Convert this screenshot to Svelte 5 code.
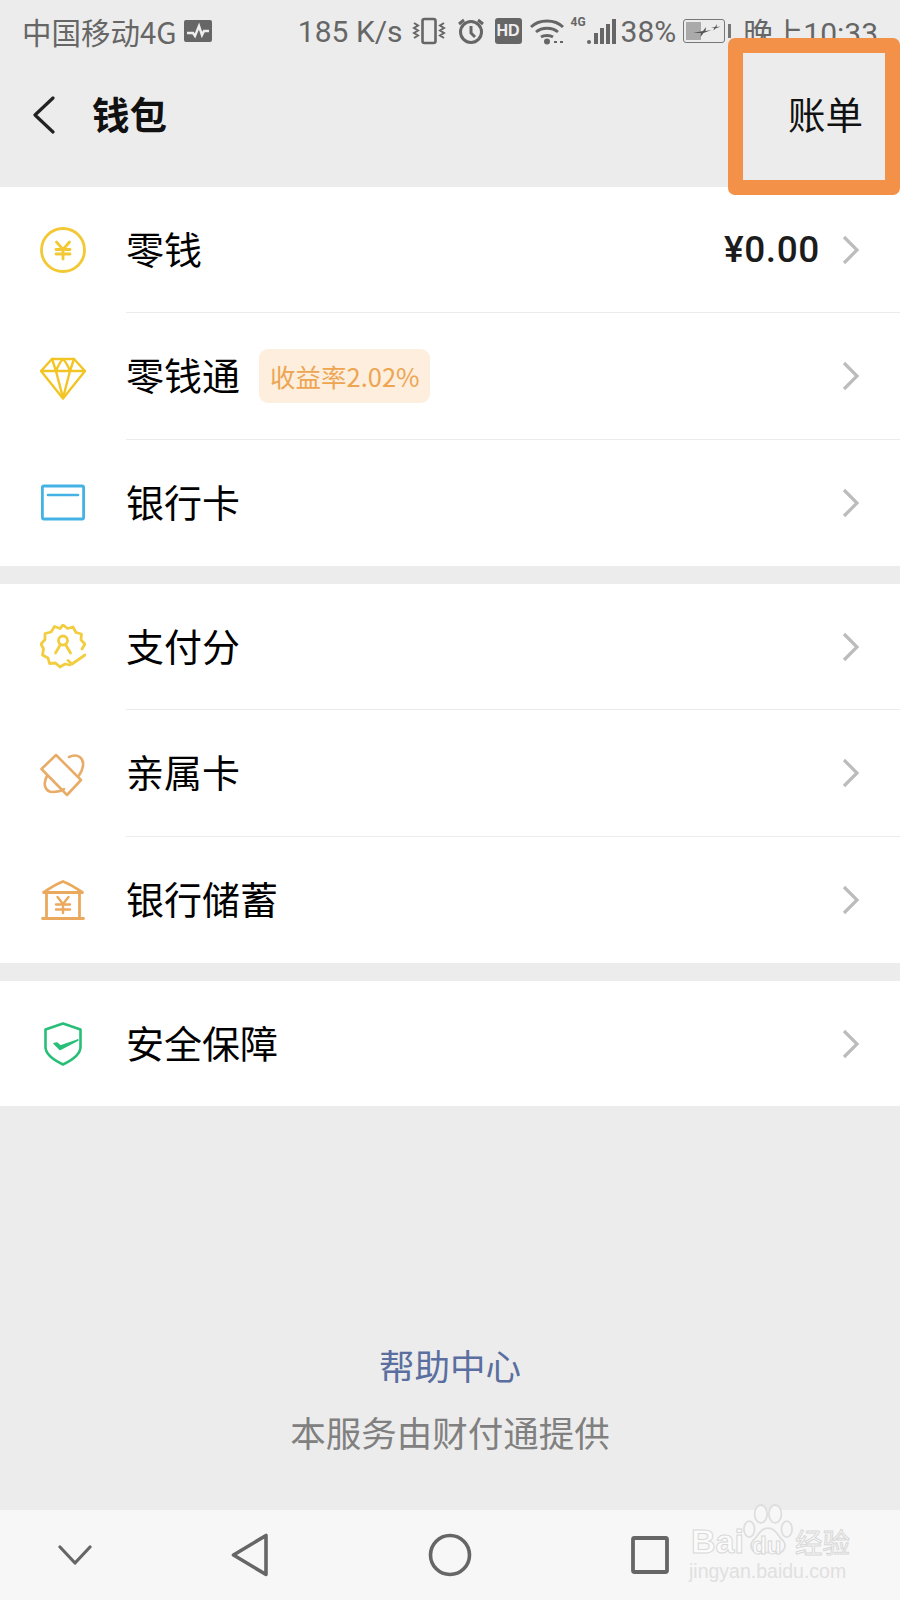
<script>
  const sections = [
    [
      { icon: "coin", label: "零钱", value: "¥0.00" },
      { icon: "diamond", label: "零钱通", badge: "收益率2.02%" },
      { icon: "card", label: "银行卡" },
    ],
    [
      { icon: "score", label: "支付分" },
      { icon: "family", label: "亲属卡" },
      { icon: "bank", label: "银行储蓄" },
    ],
    [{ icon: "shield", label: "安全保障" }],
  ];
</script>

{#snippet rowIcon(name)}
  <svg class="row-icon" viewBox="0 0 46 46" width="46" height="46" fill="none" stroke-linecap="round" stroke-linejoin="round">
    {#if name === "coin"}
      <g stroke="#f2c834">
        <circle cx="23" cy="23" r="21.5" stroke-width="2.8" />
        <path d="M16.5 15 23 22.500l6.500-7.500M16 22.500h14M16 27h14M23 22.500v9.500" stroke-width="2.800" fill="none" />
      </g>
    {:else if name === "diamond"}
      <g stroke="#f2c525" stroke-width="2.400">
        <path d="M12 5h22L45 17 23 44.500 1 17Z" />
        <path d="M1 17h44M12 5l4 12 7 27 7-27 4-12M16 17c2-5 4-9 7-12 3 3 5 7 7 12" />
      </g>
    {:else if name === "card"}
      <g stroke="#45b2e5">
        <rect x="2.400" y="6" width="41.200" height="33" rx="1.500" stroke-width="2.800" />
        <path d="M8 15h30" stroke-width="2.600" />
      </g>
    {:else if name === "score"}
      <g stroke="#f3cd40" stroke-width="2.800">
        <path d="M30 41 25 40l-5 3-4.500-4-6 .5L8 34l-5.500-3 1-6L1 20l4-4.500L5 9.500 11 8l3.500-5.500L20 4.500 23 1l4.500 3.500 5.500-1.500 3 5.500 5.500 1.500-.500 6L45 20l-3 5" />
        <circle cx="23" cy="16.500" r="4.500" />
        <path d="M20.500 20.500 15.500 29M25.500 20.500l5 8.500" />
        <path d="m28 36.500 4 3.500 13-9" />
      </g>
    {:else if name === "family"}
      <g stroke="#e9ac68" stroke-width="2.600">
        <path d="M1.500 18 16 4 41 29 27 44Z" />
        <path d="M29 6C38 2 44 7 43 15c-.400 3-2 6.500-4 9.500M7 25C2.500 33 5 41 13 41c4 0 8-1 11-3" />
      </g>
    {:else if name === "bank"}
      <g stroke="#eba95d" stroke-width="2.800">
        <path d="M3.500 15.500C10 11 16 7 23 4.500c7 2.500 13 6.500 19.500 11Z" />
        <path d="M6.500 16v25M39.500 16v25M2.500 41.500h41" />
        <path d="M17.500 20 23 27l5.500-7M16 27.500h14M16 32.500h14M23 27v9" stroke-width="2.400" />
      </g>
    {:else if name === "shield"}
      <g stroke="#27bf78" stroke-width="2.600">
        <path d="M23 2.500 40.500 8.500V26c0 7.500-8 13-17.500 17.500C13.500 39 5.500 33.500 5.500 26V8.500Z" />
        <path d="M14 22.500l6 6 18-9.500-17.500 6-3.500-3Z" fill="#27bf78" stroke-width="1.500" />
      </g>
    {/if}
  </svg>
{/snippet}

<div class="phone">
  <header class="top">
    <div class="status">
      <div class="carrier">
        <span>中国移动4G</span>
        <svg viewBox="0 0 28 24" width="28" height="24">
          <rect x="0" y="1" width="28" height="22" rx="2" fill="#666" />
          <path d="M3 14h6l2 3 4-10 3 9 2-4h5" fill="none" stroke="#eee" stroke-width="2.400" />
        </svg>
      </div>
      <div class="indicators">
        <span class="speed">185 K/s</span>
        <svg viewBox="0 0 34 28" width="34" height="28" fill="none" stroke="#666" stroke-width="2.600">
          <rect x="10.500" y="2" width="13" height="24" rx="2" />
          <path d="M2 6l4 2.500L2 11l4 2.500L2 16l4 2.500L2 21M32 6l-4 2.500L32 11l-4 2.500L32 16l-4 2.500L32 21" stroke-width="2" />
        </svg>
        <svg class="alarm" viewBox="0 0 28 28" width="28" height="28" fill="none" stroke="#666" stroke-width="3">
          <circle cx="14" cy="15" r="10.500" />
          <path d="M14 9v7l4 4M2 7l5-4M26 7l-5-4" />
        </svg>
        <span class="hd">HD</span>
        <svg class="wifi" viewBox="0 0 34 28" width="34" height="28" fill="none" stroke="#666" stroke-width="2.800">
          <path d="M1 10C9 2 25 2 33 10M6 15c6-5 16-5 22 0M11 20c3-2 9-2 12 0" />
          <circle cx="17" cy="24.500" r="3" fill="#666" stroke="none" />
          <path d="M24 25h3M30 25h3" stroke-width="2" />
        </svg>
        <div class="signal">
          <span class="tag">4G</span>
          <svg viewBox="0 0 30 26" width="30" height="26" fill="#666">
            <rect x="0" y="21" width="4" height="4" rx="2" />
            <rect x="7" y="14" width="4" height="11" />
            <rect x="13" y="9" width="4" height="16" />
            <rect x="19" y="5" width="4" height="20" />
            <rect x="25" y="0" width="4" height="25" />
          </svg>
        </div>
        <span class="pct">38%</span>
        <div class="battery">
          <div class="cell">
            <div class="charge"></div>
            <svg viewBox="0 0 30 16" width="30" height="16" fill="#555">
              <path d="M1 10 11 8l3-4-.500 4 6-1-8 3-3 4 .500-4Z" />
              <path d="M19 5l4-1 2-3-.500 3 4-.500-5 2-2 2 .500-2.500Z" />
            </svg>
          </div>
          <div class="tip"></div>
        </div>
        <span class="time">晚上10:33</span>
      </div>
    </div>
    <div class="nav">
      <svg class="back" viewBox="0 0 24 38" width="24" height="38" fill="none" stroke="#222" stroke-width="3.200" stroke-linecap="round" stroke-linejoin="round">
        <path d="M21 2 3 19l18 17" />
      </svg>
      <h1>钱包</h1>
      <span class="bill">账单</span>
    </div>
  </header>

  <main class="list">
    {#each sections as rows}
      <section class="group">
        {#each rows as row}
          <div class="row">
            {@render rowIcon(row.icon)}
            <div class="row-body">
              <span class="label">{row.label}</span>
              {#if row.badge}
                <span class="badge">{row.badge}</span>
              {/if}
              {#if row.value}
                <span class="value">{row.value}</span>
              {/if}
              <svg class="chevron" viewBox="0 0 18 30" width="18" height="30" fill="none" stroke="#bcbcbc" stroke-width="3.200">
                <path d="M2 2l13 13L2 28" />
              </svg>
            </div>
          </div>
        {/each}
      </section>
    {/each}
  </main>

  <footer class="foot">
    <span class="help">帮助中心</span>
    <span class="provider">本服务由财付通提供</span>
  </footer>

  <nav class="sysbar">
    <svg class="hide-btn" viewBox="0 0 34 22" width="34" height="22" fill="none" stroke="#666" stroke-width="3.200" stroke-linecap="round" stroke-linejoin="round">
      <path d="M2 3l15 16L32 3" />
    </svg>
    <svg viewBox="0 0 38 44" width="38" height="44" fill="none" stroke="#666" stroke-width="3.600" stroke-linejoin="round">
      <path d="M35 2.500v39L2.500 22Z" />
    </svg>
    <svg viewBox="0 0 44 44" width="44" height="44" fill="none" stroke="#666" stroke-width="3.600">
      <circle cx="22" cy="22" r="19.500" />
    </svg>
    <svg viewBox="0 0 38 38" width="38" height="38" fill="none" stroke="#666" stroke-width="3.800" stroke-linejoin="round">
      <rect x="2" y="2" width="34" height="34" rx="1.500" />
    </svg>
  </nav>

  <div class="highlight"></div>

  <div class="watermark">
    <svg class="paw" viewBox="0 0 56 60" width="50" height="54" fill="#f7f7f7" stroke="#dedede" stroke-width="2">
      <ellipse cx="20" cy="12" rx="7" ry="10" />
      <ellipse cx="36" cy="12" rx="7" ry="10" />
      <ellipse cx="7" cy="29" rx="6" ry="9" />
      <ellipse cx="49" cy="29" rx="6" ry="9" />
      <path d="M28 28c-9 0-11 9-17 14-5 6 0 15 8 14 4-1 13-1 18 0 8 1 13-8 8-14-6-5-8-14-17-14Z" />
    </svg>
    <div class="mark-top">
      <span class="bai">Bai</span>
      <span class="du">du</span>
      <span class="jy">经验</span>
    </div>
    <span class="url">jingyan.baidu.com</span>
  </div>
</div>

<style>
  :global(body) {
    margin: 0;
    background: #ececec;
  }

  .phone {
    position: relative;
    width: 900px;
    height: 1600px;
    display: flex;
    flex-direction: column;
    overflow: hidden;
    background: #ececec;
    font-family: "Noto Sans CJK SC", "Noto Sans", sans-serif;
  }

  .top {
    height: 187px;
    flex: none;
  }

  .status {
    height: 62px;
    padding: 0 22px;
    display: flex;
    justify-content: space-between;
    align-items: center;
    color: #666;
    box-sizing: border-box;
  }

  .carrier {
    display: flex;
    align-items: center;
    gap: 7px;
    font-size: 29.500px;
  }

  .indicators {
    display: flex;
    align-items: center;
    font-family: Roboto, sans-serif;
  }

  .speed {
    font-size: 30px;
    margin-right: 9px;
  }

  .alarm {
    margin-left: 11px;
  }

  .hd {
    margin-left: 10px;
    width: 27px;
    height: 26px;
    border-radius: 3px;
    background: #666;
    color: #eee;
    font: 700 16px/26px "Liberation Sans", sans-serif;
    text-align: center;
  }

  .wifi {
    margin-left: 8px;
  }

  .signal {
    margin-left: 7px;
    position: relative;
    width: 46px;
    display: flex;
    justify-content: flex-end;
    align-items: flex-end;
    height: 28px;
  }

  .tag {
    position: absolute;
    left: 0;
    top: -2px;
    font-size: 12px;
    font-weight: 700;
    line-height: 14px;
  }

  .pct {
    font-size: 30px;
    margin-left: 4px;
  }

  .battery {
    margin-left: 7px;
    display: flex;
    align-items: center;
    gap: 3px;
  }

  .cell {
    position: relative;
    width: 42px;
    height: 24px;
    border: 1.5px solid #777;
    border-radius: 3px;
    box-sizing: border-box;
    display: flex;
    align-items: center;
    justify-content: flex-end;
    padding-right: 2px;
  }

  .charge {
    position: absolute;
    left: 2px;
    top: 2px;
    bottom: 2px;
    width: 15px;
    background: #aaa;
  }

  .cell svg {
    position: relative;
  }

  .tip {
    width: 3px;
    height: 14px;
    background: #777;
  }

  .time {
    margin-left: 12px;
    font-size: 30px;
    font-family: Roboto, "Noto Sans CJK SC", sans-serif;
    white-space: nowrap;
  }

  .nav {
    height: 105px;
    display: flex;
    align-items: center;
    padding: 0 37px 4px 32px;
    box-sizing: border-box;
  }

  .back {
    flex: none;
    margin-top: 4px;
  }

  h1 {
    margin: 0 0 0 36px;
    font-size: 37.500px;
    font-weight: 700;
    color: #111;
    line-height: 1;
  }

  .bill {
    margin-left: auto;
    font-size: 37.500px;
    color: #111;
    line-height: 1;
  }

  .list {
    display: flex;
    flex-direction: column;
    gap: 18px;
    flex: none;
  }

  .group {
    background: #fff;
  }

  .row {
    display: flex;
    align-items: stretch;
    padding-left: 40px;
  }

  .row-icon {
    flex: none;
    align-self: center;
    margin-right: 40px;
  }

  .row-body {
    flex: 1;
    height: 126px;
    display: flex;
    align-items: center;
    padding-right: 40px;
    box-sizing: border-box;
    border-bottom: 1px solid #ececec;
  }

  .row:nth-child(2) .row-body {
    height: 127px;
  }

  .row:last-child .row-body {
    border-bottom: none;
    height: 126px;
  }

  .group:last-child .row-body {
    height: 125px;
  }

  .label {
    font-size: 38px;
    color: #000;
    line-height: 1;
    margin-bottom: 4px;
  }

  .badge {
    margin-left: 19px;
    height: 54px;
    padding: 0 10px 0 11px;
    border-radius: 9px;
    background: #fdeedd;
    color: #eda552;
    font-size: 25.500px;
    line-height: 54px;
  }

  .value {
    margin-left: auto;
    font-family: Roboto, sans-serif;
    font-size: 37px;
    font-weight: 500;
    color: #1c1c1c;
    letter-spacing: 0.600px;
  }

  .chevron {
    margin-left: auto;
    flex: none;
  }

  .value + .chevron {
    margin-left: 22px;
  }

  .foot {
    flex: 1;
    display: flex;
    flex-direction: column;
    justify-content: flex-end;
    align-items: center;
    gap: 19px;
    padding-bottom: 54px;
  }

  .help {
    font-size: 35.500px;
    line-height: 48px;
    color: #5a6f9f;
  }

  .provider {
    font-size: 35.500px;
    line-height: 48px;
    color: #808080;
  }

  .sysbar {
    height: 90px;
    flex: none;
    background: #f7f7f7;
    display: flex;
    align-items: center;
    gap: 159px;
    padding-left: 58px;
  }

  .hide-btn {
    margin-right: -20px;
  }

  /* orange annotation drawn over the screenshot */
  .highlight {
    position: absolute;
    left: 728px;
    top: 38px;
    width: 172px;
    height: 157px;
    border: 15px solid #f39149;
    border-radius: 7px;
    box-sizing: border-box;
  }

  .watermark {
    position: absolute;
    left: 689px;
    top: 1503px;
    width: 165px;
    height: 78px;
    font-family: "Liberation Sans", sans-serif;
    color: #fbfbfb;
  }

  .paw {
    position: absolute;
    left: 54px;
    top: 0;
  }

  .mark-top {
    position: absolute;
    left: 0;
    top: 21px;
    width: 165px;
    height: 34px;
    -webkit-text-stroke: 1px #d8d8d8;
  }

  .bai {
    position: absolute;
    left: 2px;
    top: 0;
    font-size: 34px;
    font-weight: 700;
    line-height: 34px;
  }

  .du {
    position: absolute;
    left: 63px;
    top: 10px;
    font-size: 24px;
    font-weight: 700;
    line-height: 24px;
  }

  .jy {
    position: absolute;
    left: 106px;
    top: 3px;
    font-size: 27.500px;
    line-height: 28px;
    font-family: "Noto Sans CJK SC", sans-serif;
    white-space: nowrap;
  }

  .url {
    position: absolute;
    left: 0;
    top: 57px;
    font-size: 19.500px;
    line-height: 22px;
    color: #e0e0e0;
    white-space: nowrap;
  }
</style>
